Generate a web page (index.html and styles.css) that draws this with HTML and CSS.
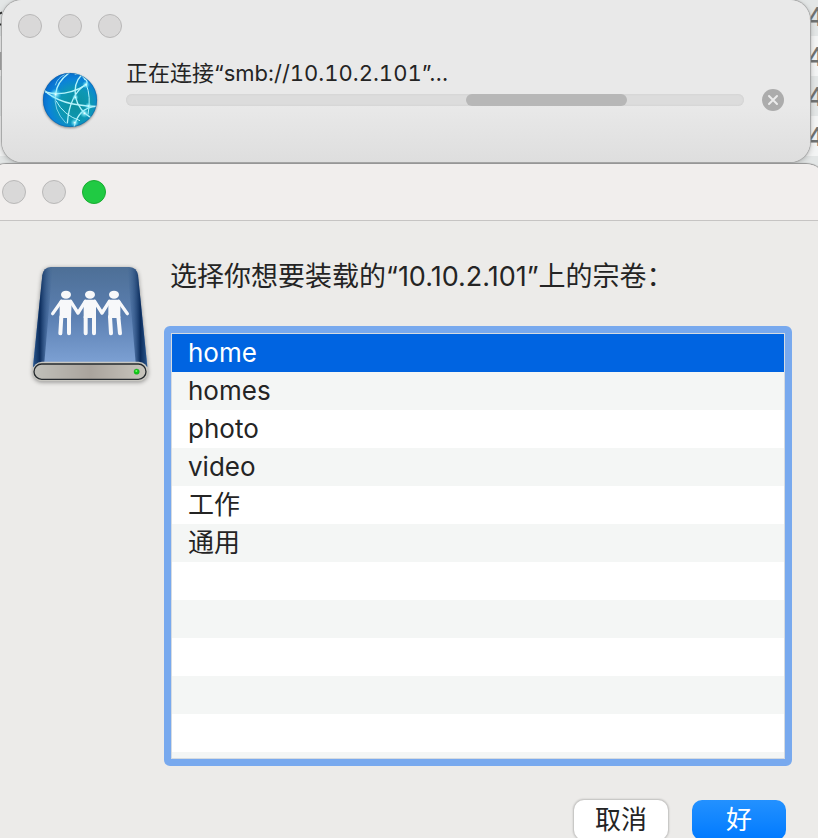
FILE: index.html
```html
<!DOCTYPE html>
<html lang="zh-CN">
<head>
  <meta charset="UTF-8" />
  <meta name="viewport" content="width=device-width, initial-scale=1.0" />
  <title>连接服务器</title>
  <link rel="stylesheet" href="styles.css">
</head>
<body>
  <!-- file list behind the windows -->
  <div class="backdrop">
    <svg class="backdrop-mark" viewBox="0 0 2 80" aria-hidden="true">
      <path d="M0 13.5L2 12.500M0 24.500H2" stroke="#222" stroke-width="2" />
      <path d="M1 52V70" stroke="#555" stroke-width="1" />
    </svg>
    <div class="backdrop-row">4</div>
    <div class="backdrop-row">4</div>
    <div class="backdrop-row">4</div>
    <div class="backdrop-row">4</div>
    <div class="backdrop-row"></div>
  </div>

  <section class="window connect">
    <div class="lights">
      <button class="light" type="button" aria-label="关闭"></button>
      <button class="light" type="button" aria-label="最小化"></button>
      <button class="light" type="button" aria-label="缩放"></button>
    </div>
    <div class="connect-body">
      <svg class="globe" viewBox="36 36 168 168" aria-hidden="true">
        <defs>
          <radialGradient id="sea" cx="60%" cy="60%" r="65%">
            <stop offset="0" stop-color="#0c8f9c" />
            <stop offset="0.45" stop-color="#0d98b4" />
            <stop offset="0.75" stop-color="#0b83d8" />
            <stop offset="1" stop-color="#0868cc" />
          </radialGradient>
          <radialGradient id="spark">
            <stop offset="0" stop-color="#fff" />
            <stop offset="0.3" stop-color="#9df4ff" stop-opacity="0.7" />
            <stop offset="1" stop-color="#4fe0ff" stop-opacity="0" />
          </radialGradient>
          <clipPath id="ball"><circle cx="120" cy="120" r="81" /></clipPath>
        </defs>
        <circle cx="120" cy="120" r="81" fill="url(#sea)" />
        <g clip-path="url(#ball)">
          <g fill="none" stroke="#b5f3fb" stroke-width="4">
            <path d="M46 96Q105 112 165 77Q178 66 164 56" />
            <path d="M40 88Q88 138 200 139" />
            <path d="M77 102Q80 66 118 38" />
            <path d="M77 102Q68 148 108 190" stroke-width="2" />
            <path d="M134 42Q154 38 166 60" />
            <path d="M154 46Q130 70 137 112Q145 152 190 178" />
            <path d="M168 72Q118 105 112 190" />
            <path d="M168 72Q184 108 174 164" stroke-width="3" />
            <path d="M78 122Q100 165 150 182" stroke-width="3" />
            <path d="M200 139Q145 142 132 202" />
            <path d="M76 76Q82 54 104 44" stroke-width="2" />
          </g>
          <circle cx="77" cy="103" r="18" fill="url(#spark)" />
          <circle cx="168" cy="74" r="12" fill="url(#spark)" />
          <circle cx="136" cy="112" r="10" fill="url(#spark)" />
          <circle cx="175" cy="138" r="11" fill="url(#spark)" />
          <circle cx="163" cy="160" r="14" fill="url(#spark)" />
          <circle cx="134" cy="188" r="13" fill="url(#spark)" />
        </g>
        <circle cx="120" cy="120" r="80" fill="none" stroke="#075b9c" stroke-width="2" opacity="0.7" />
      </svg>
      <div class="connect-main">
        <p class="connect-text" id="connectText">正在连接“smb://10.10.2.101”…</p>
        <div class="progress" role="progressbar" aria-labelledby="connectText">
          <div class="progress-bar"></div>
        </div>
      </div>
      <button class="stop" type="button" aria-label="停止">
        <svg viewBox="0 0 22 22" aria-hidden="true">
          <path d="M7 7L15 15M15 7L7 15" stroke="#ececec" stroke-width="2" stroke-linecap="round" />
        </svg>
      </button>
    </div>
  </section>

  <section class="window volumes">
    <div class="titlebar lights">
      <button class="light" type="button" aria-label="关闭"></button>
      <button class="light" type="button" aria-label="最小化"></button>
      <button class="light light-green" type="button" aria-label="缩放"></button>
    </div>
    <form class="volumes-body">
      <svg class="drive" viewBox="30 45 360 360" aria-hidden="true">
        <defs>
          <linearGradient id="lid" x1="0" y1="0" x2="0" y2="1">
            <stop offset="0" stop-color="#4d6f96" />
            <stop offset="0.5" stop-color="#5c80b2" />
            <stop offset="1" stop-color="#7fa3d6" />
          </linearGradient>
          <linearGradient id="front" x1="0" y1="0" x2="1" y2="0">
            <stop offset="0" stop-color="#c0c0ba" />
            <stop offset="0.5" stop-color="#aaa49d" />
            <stop offset="1" stop-color="#c8c5bd" />
          </linearGradient>
          <linearGradient id="leftSide" x1="0" y1="0" x2="1" y2="0">
            <stop offset="0" stop-color="#2a568c" />
            <stop offset="0.35" stop-color="#0b2c5c" />
            <stop offset="1" stop-color="#3b6498" stop-opacity="0" />
          </linearGradient>
          <linearGradient id="rightSide" x1="0" y1="0" x2="1" y2="0">
            <stop offset="0" stop-color="#3b6498" stop-opacity="0" />
            <stop offset="0.65" stop-color="#0b2c5c" />
            <stop offset="1" stop-color="#2a568c" />
          </linearGradient>
        </defs>
        <path d="M92 51H328Q350 52 354 76L382 350H39L67 76Q71 52 92 51Z" fill="url(#lid)" />
        <path d="M92 51H98L72 350H39L67 76Q71 52 92 51Z" fill="url(#leftSide)" />
        <path d="M322 51H328Q350 52 354 76L382 350H348Z" fill="url(#rightSide)" />
        <rect x="38" y="335" width="346" height="59" rx="28" fill="#c9c8c2" />
        <rect x="42" y="342" width="336" height="46" rx="23" fill="url(#front)" stroke="#252a2e" stroke-width="4" />
        <circle cx="350" cy="365" r="8" fill="#10c818" stroke="#168b1b" stroke-width="1" />
        <circle cx="349" cy="363" r="3" fill="#6cff65" />
        <!-- three people holding hands -->
        <g fill="#f7f8fa">
          <ellipse cx="138" cy="134" rx="15" ry="12" />
          <ellipse cx="210" cy="134" rx="15" ry="12" />
          <ellipse cx="282" cy="134" rx="15" ry="12" />
          <path d="M124 149H152L155 153L153 204H119V153Z" />
          <path d="M196 149H224L228 153V204H191V153Z" />
          <path d="M268 149H296L301 153V204H265V153Z" />
        </g>
        <g fill="none" stroke="#f7f8fa" stroke-linecap="round" stroke-linejoin="round">
          <path d="M124 154L98 191M152 154L174 189L196 154M224 154L246 189L268 154M296 154L322 191" stroke-width="10" />
          <path d="M124 200L121 250M147 200V250M197 200V250M222 200V250M270 200L273 250M295 200L300 250" stroke-width="12" />
        </g>
      </svg>
      <div class="volumes-main">
        <h1 class="volumes-title" id="volumesTitle">选择你想要装载的“10.10.2.101”上的宗卷：</h1>
        <div class="list" role="radiogroup" aria-labelledby="volumesTitle">
          <label class="row"><input type="radio" name="volume" checked>home</label>
          <label class="row"><input type="radio" name="volume">homes</label>
          <label class="row"><input type="radio" name="volume">photo</label>
          <label class="row"><input type="radio" name="volume">video</label>
          <label class="row"><input type="radio" name="volume">工作</label>
          <label class="row"><input type="radio" name="volume">通用</label>
        </div>
        <div class="actions">
          <button class="btn" type="button">取消</button>
          <button class="btn btn-primary" type="button">好</button>
        </div>
      </div>
    </form>
  </section>
</body>
</html>
```

FILE: styles.css
```css
* {
  box-sizing: border-box;
}

body {
  margin: 0;
  position: relative;
  height: 100vh;
  overflow: hidden;
  font-family: Inter, "Noto Sans CJK SC", sans-serif;
  color: #242424;
  background: #ecebe9;
}

button {
  padding: 0;
  border: none;
  font: inherit;
}

/* Background file list */
.backdrop {
  position: absolute;
  top: -4px;
  left: 0;
  right: 0;
  z-index: -1;
  overflow: hidden;
}

.backdrop-mark {
  position: absolute;
  top: 4px;
  left: 0;
  width: 2px;
  height: 80px;
}

.backdrop-row {
  height: 40px;
  padding-right: 10px;
  margin-right: -16px;
  line-height: 42px;
  font-size: 26px;
  font-weight: 500;
  text-align: right;
  color: #707272;
  background: #f3f4f4;
}

.backdrop-row:nth-of-type(odd) {
  background: #e3e6e6;
}

/* Windows */
.lights {
  display: flex;
  gap: 16px;
}

.light {
  width: 24px;
  height: 24px;
  border: 1px solid #b9b8b8;
  border-radius: 50%;
  background: #d9d8d8;
}

.light-green {
  border-color: #18ac30;
  background: #20ca43;
}

.connect {
  height: 162px;
  margin: 0 8px 0 2px;
  padding: 14px 26px 0 16px;
  border-radius: 20px;
  background: linear-gradient(#e9e9e9 65%, #dedede);
  box-shadow: 0 0 1px 1px #a5a5a5, 0 2px 6px rgba(0, 0, 0, 0.25);
}

.connect-body {
  display: flex;
  align-items: flex-start;
  padding: 20px 0 0 24px;
}

.globe {
  width: 56px;
  height: 56px;
  margin: 14px 28px 0 0;
  filter: drop-shadow(0 1px 1px rgba(0, 0, 0, 0.4));
}

.connect-main {
  flex: 1;
}

.connect-text {
  margin: 0 0 6px;
  font-size: 22px;
  line-height: 30px;
  font-variant-numeric: tabular-nums;
}

.progress {
  height: 12px;
  border-radius: 6px;
  background: #dcdcdc;
  box-shadow: inset 0 0 2px #c8c8c8;
}

.progress-bar {
  width: 26%;
  height: 12px;
  margin-left: 55%;
  border-radius: 6px;
  background: #b7b7b7;
}

.stop {
  width: 22px;
  height: 22px;
  margin: 31px 0 0 18px;
  border-radius: 50%;
  background: #acacac;
}

.stop svg {
  display: block;
}

.volumes {
  margin: 2px -8px 0 -14px;
  border-radius: 20px 20px 0 0;
  background: #ecebe9;
  box-shadow: 0 0 1px 1px #929292;
}

.titlebar {
  height: 57px;
  padding: 16px;
  border-bottom: 1px solid #c6c4c3;
  border-radius: 20px 20px 0 0;
  background: #f1eeed;
}

.volumes-body {
  display: flex;
  align-items: flex-start;
  padding: 36px 34px 0 44px;
}

.drive {
  width: 120px;
  height: 120px;
  margin: 8px 14px 0 0;
  filter: drop-shadow(0 1px 2px rgba(0, 0, 0, 0.4));
}

.volumes-main {
  flex: 1;
}

.volumes-title {
  margin: 0 0 29px;
  padding-left: 6px;
  font-size: 27px;
  font-weight: 400;
  line-height: 40px;
}

.list {
  height: 440px;
  padding: 1px;
  overflow: hidden;
  border: 7px solid #78a9ee;
  border-radius: 6px;
  background: repeating-linear-gradient(#fff 0 38px, #f4f6f5 38px 76px) content-box, #d5dbe1 padding-box;
}

.row {
  display: block;
  height: 38px;
  padding-left: 16px;
  font-size: 26px;
  line-height: 38px;
}

.row input {
  position: absolute;
  appearance: none;
  margin: 0;
}

.row:has(input:checked) {
  background: #0064e1;
  color: #fff;
}

.actions {
  display: flex;
  justify-content: flex-end;
  gap: 24px;
  padding: 34px 6px 20px 0;
}

.btn {
  width: 94px;
  height: 40px;
  border-radius: 10px;
  font-size: 26px;
  line-height: 38px;
  color: #242424;
  background: #fff;
  box-shadow: 0 0 2px 1px rgba(0, 0, 0, 0.2);
}

.btn-primary {
  color: #fff;
  background: linear-gradient(#2391ff, #007aff);
  box-shadow: none;
}
```
